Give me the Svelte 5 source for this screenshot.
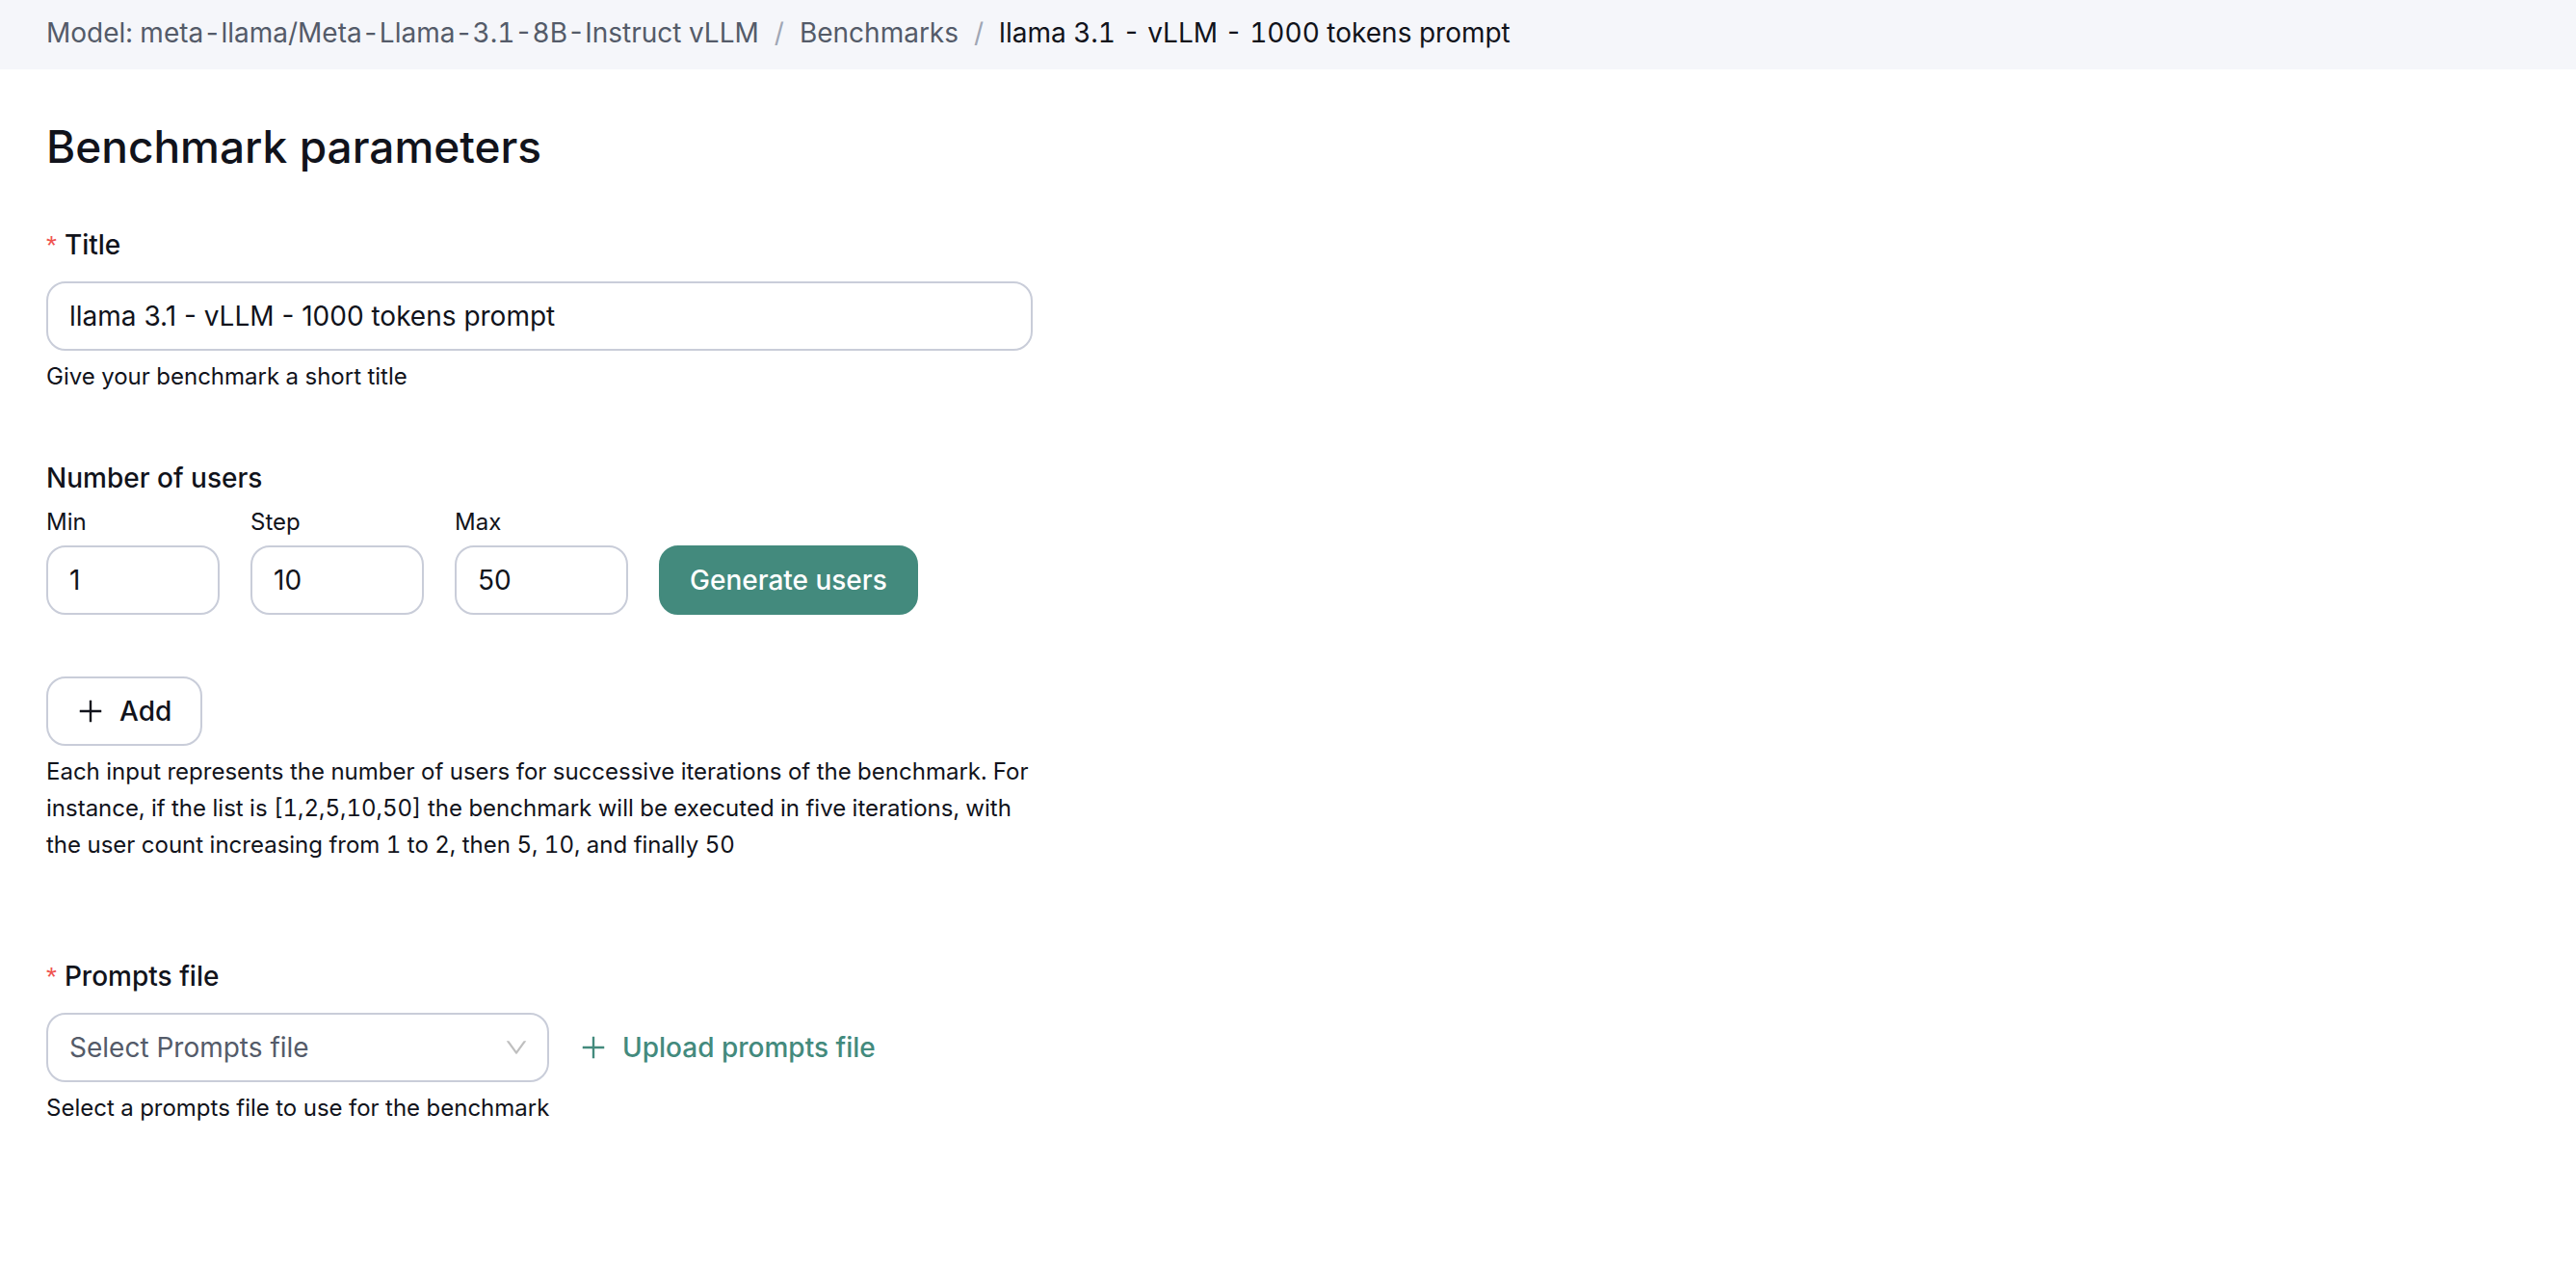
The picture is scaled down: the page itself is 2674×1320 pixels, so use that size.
<script lang="ts">
  let title = $state('llama 3.1 - vLLM - 1000 tokens prompt');
  let range = $state([
    { id: 'min', label: 'Min', value: '1' },
    { id: 'step', label: 'Step', value: '10' },
    { id: 'max', label: 'Max', value: '50' },
  ]);
</script>

{#snippet plus()}
  <svg class="plus" viewBox="64 64 896 896" aria-hidden="true">
    <path d="M482 152h60q8 0 8 8v704q0 8-8 8h-60q-8 0-8-8V160q0-8 8-8Z" />
    <path d="M160 474h704q8 0 8 8v60q0 8-8 8H160q-8 0-8-8v-60q0-8 8-8Z" />
  </svg>
{/snippet}

<nav class="breadcrumb" aria-label="Breadcrumb">
  <a href="#model">Model: meta-llama/Meta-Llama-3.1-8B-Instruct vLLM</a>
  <span class="separator">/</span>
  <a href="#benchmarks">Benchmarks</a>
  <span class="separator">/</span>
  <span class="current" aria-current="page">llama 3.1 - vLLM - 1000 tokens prompt</span>
</nav>

<main>
  <h1>Benchmark parameters</h1>
  <form>
    <section class="field">
      <label class="label" for="title"><span class="required">*</span>Title</label>
      <input id="title" type="text" bind:value={title} aria-describedby="title-help" />
      <p class="help" id="title-help">Give your benchmark a short title</p>
    </section>

    <fieldset class="users">
      <legend class="label">Number of users</legend>
      <div class="range">
        {#each range as item (item.id)}
          <div class="number">
            <label for={item.id}>{item.label}</label>
            <input id={item.id} type="text" inputmode="numeric" bind:value={item.value} />
          </div>
        {/each}
        <button type="button" class="primary">Generate users</button>
      </div>
      <button type="button" class="add">{@render plus()}Add</button>
      <p class="help">
        Each input represents the number of users for successive iterations of the benchmark. For
        instance, if the list is [1,2,5,10,50] the benchmark will be executed in five iterations,
        with the user count increasing from 1 to 2, then 5, 10, and finally 50
      </p>
    </fieldset>

    <section class="field">
      <label class="label" for="prompts"><span class="required">*</span>Prompts file</label>
      <div class="prompts">
        <div class="select">
          <select id="prompts" aria-describedby="prompts-help">
            <option value="">Select Prompts file</option>
          </select>
          <svg class="chevron" viewBox="64 64 896 896" aria-hidden="true">
            <path d="M884 256h-75c-5.1 0-9.9 2.5-12.9 6.6L512 654.2 227.9 262.6c-3-4.1-7.8-6.6-12.9-6.6h-75c-6.5 0-10.3 7.4-6.5 12.7l352.6 486.1c12.8 17.6 39 17.6 51.7 0l352.6-486.1c3.9-5.3.1-12.7-6.4-12.7z" />
          </svg>
        </div>
        <button type="button" class="link">{@render plus()}Upload prompts file</button>
      </div>
      <p class="help" id="prompts-help">Select a prompts file to use for the benchmark</p>
    </section>
  </form>
</main>

<style>
  :global(body) {
    margin: 0;
    background: #fff;
    color: #11131b;
    font-family: Inter, 'Liberation Sans', sans-serif;
    font-size: 28px;
    line-height: 44px;
    font-feature-settings: 'tnum';
  }

  .breadcrumb {
    display: flex;
    flex-wrap: wrap;
    gap: 16px;
    padding: 12px 48px 16px;
    background: #f5f6fa;
  }

  .breadcrumb a {
    color: #545b69;
    text-decoration: none;
  }

  .separator {
    color: #a0a6b4;
  }

  main {
    padding: 50px 48px;
  }

  h1 {
    margin: 0 0 50px;
    font-size: 46px;
    font-weight: 500;
    line-height: 60px;
  }

  form {
    max-width: 1024px;
  }

  .label {
    display: block;
    padding: 0;
    font-weight: 500;
  }

  .field .label {
    display: flex;
    align-items: baseline;
    gap: 8px;
    margin-bottom: 16px;
  }

  .required {
    color: #ef5350;
    font-family: 'Liberation Sans', sans-serif;
    font-weight: 400;
    line-height: 28px;
  }

  input,
  select,
  button {
    box-sizing: border-box;
    height: 72px;
    border: 2px solid #c9cdd9;
    border-radius: 20px;
    background: #fff;
    color: inherit;
    font: inherit;
    font-feature-settings: normal;
  }

  input {
    display: block;
    width: 100%;
    padding: 0 22px;
  }

  .help {
    margin: 8px 0 0;
    font-size: 24px;
    line-height: 38px;
  }

  .users {
    min-width: 0;
    margin: 64px 0 95px;
    padding: 0;
    border: 0;
  }

  .range {
    display: flex;
    flex-wrap: wrap;
    align-items: flex-end;
    gap: 32px;
    margin: 5px 0 64px;
  }

  .number {
    width: 180px;
  }

  .number label {
    display: block;
    margin-bottom: 5px;
    font-size: 24px;
    line-height: 38px;
  }

  button {
    display: flex;
    align-items: center;
    gap: 16px;
    padding: 0 30px;
    font-weight: 500;
    cursor: pointer;
  }

  .primary {
    border-color: #438a7d;
    background: #438a7d;
    color: #fff;
  }

  .plus {
    flex: none;
    width: 28px;
    height: 28px;
    fill: currentColor;
  }

  .prompts {
    display: flex;
    flex-wrap: wrap;
    gap: 32px;
  }

  .select {
    position: relative;
    width: 522px;
  }

  select {
    width: 100%;
    padding: 0 64px 0 22px;
    appearance: none;
    color: #545b69;
  }

  .chevron {
    position: absolute;
    top: 24px;
    right: 22px;
    width: 24px;
    height: 24px;
    fill: #bfbfbf;
    pointer-events: none;
  }

  .link {
    padding: 0;
    border: 0;
    background: none;
    color: #438a7d;
  }
</style>
